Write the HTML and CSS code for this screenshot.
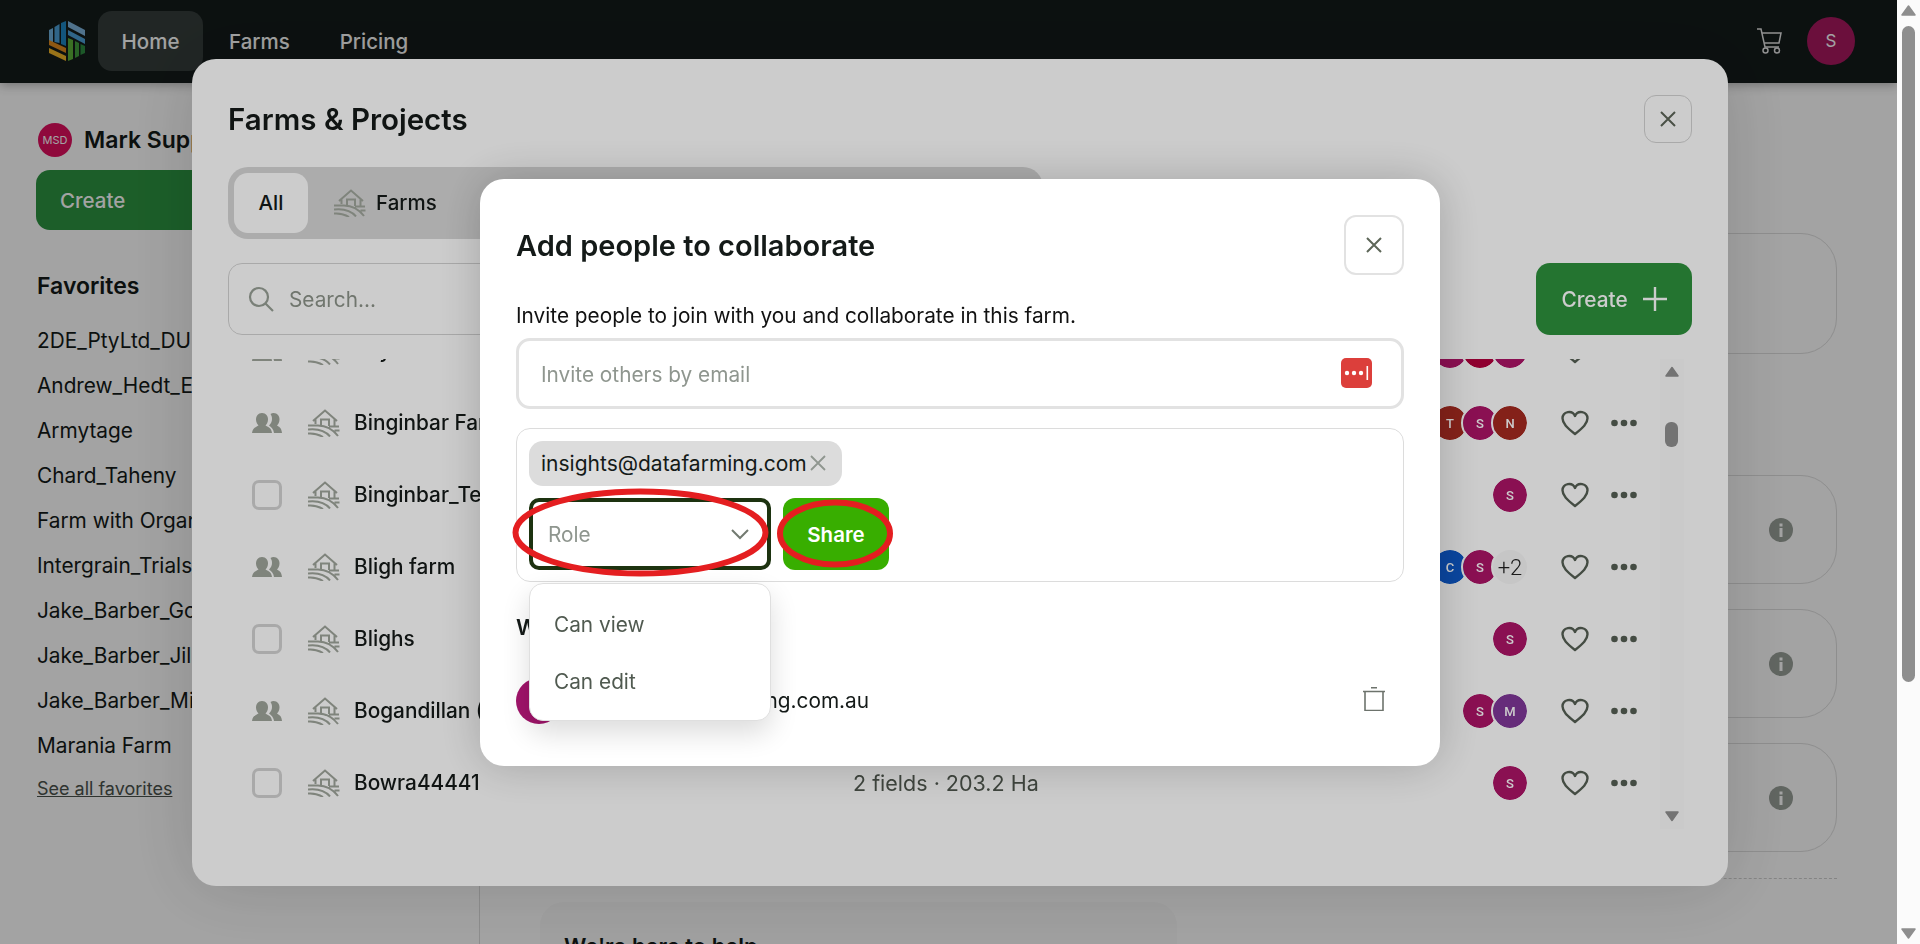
FILE: index.html
```html
<!doctype html>
<html>

<head>
<title>Farms &amp; Projects</title>
<link rel="stylesheet" href="styles.css">
</head>

<body>

<svg class="defs">
	<symbol id="farm" viewBox="0 0 32 28">
		<path d="M5 12 17 1.500 29 12M7.500 10.500V15M26.500 10.500V17M13 16V10.500h8V17" fill="none" stroke="currentColor" stroke-width="2"/>
		<path d="M0 16.500h10c8 0 15 4 20 10.500M0 20.500c9-1 17 1 22 7M0 24.500c6-.5 11 1 15 3.500M21 17.500h10M26.500 21.500h5" fill="none" stroke="currentColor" stroke-width="2"/>
	</symbol>
	<symbol id="people" viewBox="0 0 30 20">
		<path d="M10 0c4 0 6 3 6 6.500 0 3-1.500 5-2.500 6 2 1.500 6 2 6.500 7.500H0c.5-5.500 4.500-6 6.500-7.500-1-1-2.500-3-2.500-6C4 3 6 0 10 0Z" fill="currentColor"/>
		<path d="M18.500 1c1-.6 2-1 3-1 4 0 6 3 6 6.500 0 3-1.500 5-2.500 6 2 1.500 4.500 2 5 7.500h-8c-.5-4-3-6-5-7.500 2-2 3-4 3-6.500 0-2-.5-3.500-1.500-5Z" fill="currentColor"/>
	</symbol>
	<symbol id="heart" viewBox="0 0 28 26">
		<path d="M14 24C6 17.500 1.500 13.500 1.500 8.300A6.500 6.500 0 0 1 14 6a6.500 6.500 0 0 1 12.500 2.300C26.500 13.500 22 17.500 14 24Z" fill="none" stroke="currentColor" stroke-width="2.400" stroke-linejoin="round"/>
	</symbol>
	<symbol id="dots" viewBox="0 0 26 8">
		<circle cx="3.500" cy="4" r="3.300" fill="currentColor"/>
		<circle cx="13" cy="4" r="3.300" fill="currentColor"/>
		<circle cx="22.500" cy="4" r="3.300" fill="currentColor"/>
	</symbol>
	<symbol id="info" viewBox="0 0 24 24">
		<circle cx="12" cy="12" r="12" fill="currentColor"/>
		<rect x="10.500" y="10" width="3" height="9" fill="#fff"/>
		<rect x="10.500" y="5.500" width="3" height="3" fill="#fff"/>
	</symbol>
	<symbol id="cross" viewBox="0 0 18 18">
		<path d="M2 2l14 14M16 2 2 16" fill="none" stroke="currentColor" stroke-width="2"/>
	</symbol>
</svg>

<div id="page">
	<div id="header">
		<svg class="logo" viewBox="0 0 36 40">
			<path d="M0 9l4-2v14H0Z" fill="#6fb0dc"/>
			<path d="M5.500 6l5-3v19l-5-1Z" fill="#4c9fd6"/>
			<path d="M12 2l5-2v25l-5-2Z" fill="#1f86c4"/>
			<path d="M19 0l17 9v6L19 6Z" fill="#7db3dc"/>
			<path d="M19 9l17 9v5L19 14Z" fill="#4c9fd6"/>
			<path d="M0 19l17 8v5L0 24Z" fill="#e08a1e"/>
			<path d="M0 27l17 8v5L0 32Z" fill="#f0b428"/>
			<path d="M19 17l5 2v19l-5 2Z" fill="#5cae3a"/>
			<path d="M26 20l4 2v13l-4 2Z" fill="#3f9a3c"/>
			<path d="M31.500 23l4.500 2v7l-4.500 2Z" fill="#2e8a3f"/>
		</svg>
		<div class="navItem active">Home</div>
		<div class="navItem">Farms</div>
		<div class="navItem">Pricing</div>
		<div class="headerRight">
			<svg class="cart" viewBox="0 0 26 26">
				<path d="M1 1h4l4 18h14M6 5h19l-2 10H8" fill="none" stroke="currentColor" stroke-width="1.500"/>
				<circle cx="9.500" cy="22.500" r="2.500" fill="none" stroke="currentColor" stroke-width="1.500"/>
				<circle cx="21" cy="22.500" r="2.500" fill="none" stroke="currentColor" stroke-width="1.500"/>
			</svg>
			<div class="userAvatar">S</div>
		</div>
	</div>
	<div id="content">
		<div id="sidebar">
			<div class="account">
				<div class="accountAvatar">MSD</div>
				<div class="accountName">Mark Supplies Demo</div>
			</div>
			<div class="sideCreate">Create</div>
			<div class="favTitle">Favorites</div>
			<div class="favItem">2DE_PtyLtd_DUNN</div>
			<div class="favItem">Andrew_Hedt_East</div>
			<div class="favItem">Armytage</div>
			<div class="favItem">Chard_Taheny</div>
			<div class="favItem">Farm with Organic</div>
			<div class="favItem">Intergrain_Trials</div>
			<div class="favItem">Jake_Barber_Gold</div>
			<div class="favItem">Jake_Barber_Jilly</div>
			<div class="favItem">Jake_Barber_Mill</div>
			<div class="favItem">Marania Farm</div>
			<a class="seeAll">See all favorites</a>
		</div>
		<div id="main">
			<div class="mainLeft">
				<div class="helpCard">We're here to help</div>
			</div>
			<div class="mainRight">
				<div class="card first"></div>
				<div class="card"><svg class="infoIcon"><use href="#info"/></svg></div>
				<div class="card"><svg class="infoIcon"><use href="#info"/></svg></div>
				<div class="card"><svg class="infoIcon"><use href="#info"/></svg></div>
				<div class="dashed"></div>
			</div>
		</div>
	</div>
</div>

<div class="overlay">
	<div id="farmsModal">
		<div class="modalTop">
			<div class="modalTitle">Farms &amp; Projects</div>
			<div class="closeSmall"><svg class="crossIcon"><use href="#cross"/></svg></div>
		</div>
		<div class="tabs">
			<div class="tab selected">All</div>
			<div class="tab"><svg class="farmIcon tabIcon"><use href="#farm"/></svg>Farms</div>
		</div>
		<div class="toolbar">
			<div class="searchBox">
				<svg class="searchIcon" viewBox="0 0 26 26">
					<circle cx="11" cy="11" r="9" fill="none" stroke="currentColor" stroke-width="2.200"/>
					<path d="M17.500 17.500 25 25" stroke="currentColor" stroke-width="2.200"/>
				</svg>
				Search...
			</div>
			<div class="createBtn">Create
				<svg class="plusIcon" viewBox="0 0 24 24"><path d="M12 0v24M0 12h24" stroke="currentColor" stroke-width="2.400"/></svg>
			</div>
		</div>
		<div class="listWrap">
			<div class="rows">
				<div class="row firstRow">
					<svg class="peopleIcon"><use href="#people"/></svg>
					<svg class="farmIcon"><use href="#farm"/></svg>
					<div class="prodName">Bay</div>
					<div class="fields"></div>
					<div class="avatars">
						<div class="avatar magenta">S</div>
						<div class="avatar crimson">T</div>
						<div class="avatar magenta">S</div>
					</div>
					<svg class="heart"><use href="#heart"/></svg>
					<svg class="dots"><use href="#dots"/></svg>
				</div>
				<div class="row">
					<svg class="peopleIcon"><use href="#people"/></svg>
					<svg class="farmIcon"><use href="#farm"/></svg>
					<div class="prodName">Binginbar Farm</div>
					<div class="fields"></div>
					<div class="avatars">
						<div class="avatar rust">T</div>
						<div class="avatar magenta">S</div>
						<div class="avatar rust">N</div>
					</div>
					<svg class="heart"><use href="#heart"/></svg>
					<svg class="dots"><use href="#dots"/></svg>
				</div>
				<div class="row">
					<div class="checkbox"></div>
					<svg class="farmIcon"><use href="#farm"/></svg>
					<div class="prodName">Binginbar_Test</div>
					<div class="fields"></div>
					<div class="avatars">
						<div class="avatar magenta">S</div>
					</div>
					<svg class="heart"><use href="#heart"/></svg>
					<svg class="dots"><use href="#dots"/></svg>
				</div>
				<div class="row">
					<svg class="peopleIcon"><use href="#people"/></svg>
					<svg class="farmIcon"><use href="#farm"/></svg>
					<div class="prodName">Bligh farm</div>
					<div class="fields"></div>
					<div class="avatars">
						<div class="avatar blue">C</div>
						<div class="avatar magenta">S</div>
						<div class="avatar more">+2</div>
					</div>
					<svg class="heart"><use href="#heart"/></svg>
					<svg class="dots"><use href="#dots"/></svg>
				</div>
				<div class="row">
					<div class="checkbox"></div>
					<svg class="farmIcon"><use href="#farm"/></svg>
					<div class="prodName">Blighs</div>
					<div class="fields"></div>
					<div class="avatars">
						<div class="avatar magenta">S</div>
					</div>
					<svg class="heart"><use href="#heart"/></svg>
					<svg class="dots"><use href="#dots"/></svg>
				</div>
				<div class="row">
					<svg class="peopleIcon"><use href="#people"/></svg>
					<svg class="farmIcon"><use href="#farm"/></svg>
					<div class="prodName">Bogandillan (1)</div>
					<div class="fields"></div>
					<div class="avatars">
						<div class="avatar magenta">S</div>
						<div class="avatar purple">M</div>
					</div>
					<svg class="heart"><use href="#heart"/></svg>
					<svg class="dots"><use href="#dots"/></svg>
				</div>
				<div class="row">
					<div class="checkbox"></div>
					<svg class="farmIcon"><use href="#farm"/></svg>
					<div class="prodName">Bowra44441</div>
					<div class="fields">2 fields · 203.2 Ha</div>
					<div class="avatars">
						<div class="avatar magenta">S</div>
					</div>
					<svg class="heart"><use href="#heart"/></svg>
					<svg class="dots"><use href="#dots"/></svg>
				</div>
			</div>
			<div class="track">
				<svg class="arrow" viewBox="0 0 14 11"><path d="M7 1.500 13 10H1Z" fill="currentColor" stroke="currentColor" stroke-width="1.500" stroke-linejoin="round"/></svg>
				<div class="trackThumb"></div>
				<svg class="arrow down" viewBox="0 0 14 11"><path d="M7 9.500 13 1H1Z" fill="currentColor" stroke="currentColor" stroke-width="1.500" stroke-linejoin="round"/></svg>
			</div>
		</div>
	</div>
</div>

<div class="overlay">
	<div id="shareDialog">
		<div class="dialogTop">
			<div class="dialogTitle">Add people to collaborate</div>
			<div class="closeLarge"><svg class="crossIcon"><use href="#cross"/></svg></div>
		</div>
		<div class="inviteText">Invite people to join with you and collaborate in this farm.</div>
		<div class="emailInput">
			Invite others by email
			<svg class="passIcon" viewBox="0 0 31 30">
				<rect width="31" height="30" rx="5" fill="#dc3f3b"/>
				<circle cx="6" cy="15" r="2.200" fill="#fff"/>
				<circle cx="13" cy="15" r="2.200" fill="#fff"/>
				<circle cx="20" cy="15" r="2.200" fill="#fff"/>
				<rect x="25.500" y="8" width="1.600" height="14" fill="#fff"/>
			</svg>
		</div>
		<div class="shareBox">
			<div class="chipRow">
				<div class="chip">insights@datafarming.com
					<svg class="chipX" viewBox="0 0 16 16"><path d="M1 1l14 14M15 1 1 15" stroke="currentColor" stroke-width="1.800"/></svg>
				</div>
			</div>
			<div class="roleRow">
				<div class="roleSelect">
					Role
					<svg class="chevron" viewBox="0 0 18 11"><path d="M1 1l8 8 8-8" fill="none" stroke="currentColor" stroke-width="2"/></svg>
				</div>
				<div class="shareBtn">Share</div>
			</div>
			<div class="roleMenu">
				<div class="roleOption">Can view</div>
				<div class="roleOption">Can edit</div>
			</div>
			<svg class="marks" viewBox="0 0 888 154">
				<ellipse cx="124.500" cy="104.500" rx="125" ry="41" fill="none" stroke="#e41e20" stroke-width="6"/>
				<ellipse cx="319" cy="105.500" rx="55" ry="31" fill="none" stroke="#e41e20" stroke-width="6"/>
			</svg>
		</div>
		<div class="accessTitle">Who has access</div>
		<div class="member">
			<div class="memberAvatar">S</div>
			<div class="memberEmail">insights@datafarming.com.au</div>
			<svg class="trash" viewBox="0 0 22 24">
				<path d="M8 .800h6M0 4.500h22M2 4.500v19h18v-19" fill="none" stroke="currentColor" stroke-width="1.600"/>
			</svg>
		</div>
	</div>
</div>

<div id="pageScroll">
	<svg class="scrollArrow" viewBox="0 0 15 11"><path d="M7.500 1 14 10H1Z" fill="currentColor" stroke="currentColor" stroke-width="1.500" stroke-linejoin="round"/></svg>
	<div class="scrollThumb"></div>
	<svg class="scrollArrow bottom" viewBox="0 0 15 11"><path d="M7.500 10 14 1H1Z" fill="currentColor" stroke="currentColor" stroke-width="1.500" stroke-linejoin="round"/></svg>
</div>

</body>

</html>
```

FILE: styles.css
```css
html,body {
	margin:0;
	height:100%;
	overflow:hidden;
	font-family:"Inter","Liberation Sans",sans-serif;
	font-size:20.800px;
	color:#141a18;
	background-color:#fff;
}
.defs {
	display:none;
}
#page {
	width:1897px;
	height:944px;
	overflow:hidden;
}

/* header */
#header {
	height:83px;
	box-sizing:border-box;
	padding-bottom:1px;
	display:flex;
	align-items:center;
	background-color:#141c1b;
	color:#fff;
	box-shadow:0 2px 10px rgba(0,0,0,.3);
	position:relative;
}
.logo {
	width:36px;
	height:40px;
	margin-left:49px;
	margin-right:13px;
}
.navItem {
	height:60px;
	line-height:62px;
	padding:0 24px;
	font-size:20.500px;
	font-weight:500;
	border-radius:14px;
	margin-right:2px;
}
.navItem.active {
	background-color:#353d3b;
	width:105px;
	padding:0;
	text-align:center;
}
.headerRight {
	margin-left:auto;
	display:flex;
	align-items:center;
	margin-right:42px;
}
.cart {
	width:26px;
	height:26px;
	color:#e4e4e4;
	margin-right:25px;
}
.userAvatar {
	width:48px;
	height:48px;
	border-radius:50%;
	background-color:#a81860;
	display:flex;
	align-items:center;
	justify-content:center;
	font-size:17px;
}

/* page behind the modals */
#content {
	display:flex;
	height:861px;
}
#sidebar {
	width:480px;
	border-right:1px solid #ddd;
	padding:40px 0 0 37px;
	box-sizing:border-box;
	flex-shrink:0;
	overflow:hidden;
	white-space:nowrap;
}
.account {
	display:flex;
	align-items:center;
	height:34px;
	margin-left:1px;
}
.accountAvatar {
	width:34px;
	height:34px;
	border-radius:50%;
	background-color:#e01060;
	color:#fff;
	font-size:11px;
	display:flex;
	align-items:center;
	justify-content:center;
	margin-right:12px;
}
.accountName {
	font-size:23px;
	font-weight:600;
}
.sideCreate {
	height:60px;
	line-height:62px;
	width:300px;
	margin:13px 0 0 -1px;
	padding-left:24px;
	box-sizing:border-box;
	border-radius:14px;
	background-color:#2c9441;
	color:#fff;
	font-size:20.500px;
	font-weight:500;
}
.favTitle {
	font-size:23px;
	font-weight:600;
	margin-top:42px;
	margin-bottom:18px;
}
.favItem {
	height:45px;
	line-height:45px;
}
.seeAll {
	display:block;
	font-size:18px;
	margin-top:9px;
	line-height:24px;
	text-decoration:underline;
	color:#4a524c;
}
#main {
	flex:1;
	display:flex;
	padding:0 60px;
	gap:20px;
}
.mainLeft {
	width:637px;
	padding-top:819px;
	flex-shrink:0;
}
.helpCard {
	height:200px;
	border-radius:24px;
	background-color:#fafafa;
	padding:31px 24px;
	box-sizing:border-box;
	font-size:22px;
	font-weight:600;
}
.mainRight {
	flex:1;
	padding-top:150px;
}
.card {
	height:109px;
	border:1px solid #dfdfdf;
	border-radius:36px;
	box-sizing:border-box;
	margin-bottom:25px;
	display:flex;
	align-items:center;
	justify-content:flex-end;
	padding-right:43px;
}
.card.first {
	height:121px;
	margin-bottom:121px;
}
.infoIcon {
	width:24px;
	height:24px;
	color:#99a099;
}
.dashed {
	border-top:1px dashed #d0d0d0;
	margin-top:26px;
}

/* overlays */
.overlay {
	position:fixed;
	left:0;
	top:0;
	width:100%;
	height:100%;
	display:flex;
	align-items:center;
	justify-content:center;
	background-color:rgba(0,0,0,.2);
}

/* farms modal */
#farmsModal {
	width:1536px;
	height:827px;
	box-sizing:border-box;
	padding:36px 36px 0;
	border-radius:24px;
	background-color:#fff;
	box-shadow:0 0 70px rgba(0,0,0,.14);
}
.modalTop {
	display:flex;
	align-items:center;
	justify-content:space-between;
	height:48px;
}
.modalTitle {
	font-size:29.500px;
	font-weight:600;
	padding-top:1px;
}
.closeSmall {
	width:48px;
	height:48px;
	box-sizing:border-box;
	border:1px solid #d4d4d4;
	border-radius:12px;
	display:flex;
	align-items:center;
	justify-content:center;
	color:#5d6658;
}
.crossIcon {
	width:18px;
	height:18px;
}
.tabs {
	display:flex;
	width:815px;
	height:72px;
	box-sizing:border-box;
	padding:6px;
	margin-top:24px;
	border-radius:20px;
	background-color:#d8d8d8;
}
.tab {
	height:60px;
	display:flex;
	align-items:center;
	padding:0 26px;
	border-radius:14px;
	font-size:20.500px;
	font-weight:500;
}
.tab.selected {
	width:74px;
	padding:0;
	justify-content:center;
	background-color:#fff;
}
.tabIcon {
	margin-right:10px;
	color:#626a60;
}
.farmIcon {
	width:32px;
	height:28px;
	color:#9fa59b;
	flex-shrink:0;
}
.toolbar {
	display:flex;
	justify-content:space-between;
	margin-top:24px;
}
.searchBox {
	width:815px;
	height:72px;
	box-sizing:border-box;
	border:1px solid #d4d4d4;
	border-radius:14px;
	display:flex;
	align-items:center;
	padding:2px 0 0 19px;
	color:#8d948a;
}
.searchIcon {
	width:26px;
	height:26px;
	margin:-2px 15px 0 0;
	color:#98a096;
}
.createBtn {
	width:156px;
	height:72px;
	box-sizing:border-box;
	padding-top:1px;
	display:flex;
	align-items:center;
	justify-content:center;
	border-radius:14px;
	background-color:#2e913d;
	color:#fff;
	font-weight:500;
}
.plusIcon {
	width:24px;
	height:24px;
	margin:-1px 0 0 15px;
}

/* list */
.listWrap {
	display:flex;
	height:470px;
	margin:24px 8px 0 0;
	overflow:hidden;
}
.rows {
	flex:1;
}
.row {
	height:72px;
	display:flex;
	align-items:center;
	padding:0 23px 0 24px;
}
.firstRow {
	margin-top:-44px;
}
.peopleIcon {
	width:30px;
	height:20px;
	color:#9fa59b;
	margin-right:26px;
	flex-shrink:0;
}
.checkbox {
	width:30px;
	height:30px;
	box-sizing:border-box;
	border:3px solid #d4d4d4;
	border-radius:7px;
	margin-right:26px;
	flex-shrink:0;
}
.prodName {
	width:499px;
	margin-left:14px;
	font-weight:500;
}
.fields {
	flex:1;
	color:#4f574e;
	font-size:21.500px;
}
.avatars {
	display:flex;
	margin-top:1px;
}
.avatar {
	width:38px;
	height:38px;
	box-sizing:border-box;
	border:2px solid #fff;
	border-radius:50%;
	margin-left:-8px;
	color:#fff;
	font-family:"Roboto","Liberation Sans",sans-serif;
	font-size:13px;
	font-weight:500;
	display:flex;
	align-items:center;
	justify-content:center;
}
.magenta {background-color:#ad1467; background-clip:padding-box;}
.crimson {background-color:#b3003c; background-clip:padding-box;}
.rust {background-color:#a62a20; background-clip:padding-box;}
.blue {background-color:#0d58c8; background-clip:padding-box;}
.purple {background-color:#803899; background-clip:padding-box;}
.avatar.more {
	background-color:#f8f8f8;
	color:#222;
	font-size:22px;
	font-weight:300;
}
.heart {
	width:28px;
	height:26px;
	margin-left:32px;
	color:#566054;
	flex-shrink:0;
}
.dots {
	width:26px;
	height:8px;
	margin-left:22px;
	color:#566054;
	flex-shrink:0;
}
.track {
	width:24px;
	background-color:#fdfdfd;
	position:relative;
	display:flex;
	flex-direction:column;
	align-items:center;
}
.arrow {
	width:14px;
	height:11px;
	margin-top:7px;
	color:#909090;
}
.arrow.down {
	margin-top:auto;
	margin-bottom:7px;
}
.trackThumb {
	position:absolute;
	left:5px;
	top:63px;
	width:13px;
	height:25px;
	border-radius:6px;
	background-color:#909090;
}

/* share dialog */
#shareDialog {
	width:960px;
	height:587px;
	box-sizing:border-box;
	padding:36px;
	border-radius:24px;
	background-color:#fff;
	box-shadow:0 0 45px rgba(0,0,0,.2);
	overflow:hidden;
}
.dialogTop {
	display:flex;
	align-items:center;
	justify-content:space-between;
	height:60px;
}
.dialogTitle {
	font-size:29px;
	font-weight:600;
	padding-top:1px;
}
.closeLarge {
	width:60px;
	height:60px;
	box-sizing:border-box;
	border:2px solid #e2e2e2;
	border-radius:12px;
	display:flex;
	align-items:center;
	justify-content:center;
	color:#5d6658;
}
.inviteText {
	margin-top:29px;
	line-height:24px;
	color:#111;
}
.emailInput {
	height:71px;
	margin-top:10px;
	box-sizing:border-box;
	border:3px solid #e2e2e2;
	border-radius:14px;
	display:flex;
	align-items:center;
	justify-content:space-between;
	padding:2px 29px 0 22px;
	color:#8f968f;
}
.passIcon {
	width:31px;
	height:30px;
	margin-top:-2px;
}
.shareBox {
	position:relative;
	height:154px;
	margin-top:19px;
	box-sizing:border-box;
	border:1px solid #dcdcdc;
	border-radius:14px;
	padding:12px;
}
.chipRow {
	display:flex;
}
.chip {
	height:45px;
	box-sizing:border-box;
	display:flex;
	align-items:center;
	padding:1px 16px 0 12px;
	border-radius:14px;
	background-color:#dcdcdc;
	font-size:21px;
}
.chipX {
	width:16px;
	height:16px;
	margin:-1px 0 0 3px;
	color:#8f968f;
}
.roleRow {
	display:flex;
	gap:12px;
	margin-top:12px;
}
.roleSelect {
	width:242px;
	height:72px;
	box-sizing:border-box;
	border:4px solid #1d3310;
	border-radius:10px;
	display:flex;
	align-items:center;
	justify-content:space-between;
	padding:1px 18px 0 15px;
	color:#8f968f;
}
.chevron {
	width:18px;
	height:11px;
	color:#727a70;
}
.shareBtn {
	width:106px;
	height:72px;
	line-height:74px;
	text-align:center;
	border-radius:12px;
	background-color:#38ae00;
	color:#fff;
	font-size:20.500px;
	font-weight:600;
}
.roleMenu {
	position:absolute;
	left:12px;
	top:154px;
	width:242px;
	height:138px;
	box-sizing:border-box;
	border:1px solid #dfdfdf;
	border-radius:14px;
	background-color:#fff;
	box-shadow:0 12px 28px rgba(0,0,0,.14);
	padding-top:12px;
	z-index:2;
}
.roleOption {
	height:57px;
	line-height:57px;
	padding-left:24px;
	color:#505a50;
}
.marks {
	position:absolute;
	left:-1px;
	top:-1px;
	width:888px;
	height:154px;
	overflow:visible;
	z-index:3;
}
.accessTitle {
	margin-top:33px;
	font-size:22px;
	font-weight:600;
	line-height:24px;
}
.member {
	display:flex;
	align-items:center;
	height:46px;
	margin-top:39px;
}
.memberAvatar {
	width:46px;
	height:46px;
	border-radius:50%;
	background-color:#a0146a;
	color:#fff;
	display:flex;
	align-items:center;
	justify-content:center;
	margin-right:14px;
}
.memberEmail {
	flex:1;
}
.trash {
	width:22px;
	height:24px;
	margin:-3px 19px 0 0;
	color:#6d736c;
}

/* browser scrollbar */
#pageScroll {
	position:fixed;
	right:0;
	top:0;
	width:23px;
	height:100%;
	background-color:#fbfbfb;
}
.scrollArrow {
	position:absolute;
	left:4px;
	top:5px;
	width:15px;
	height:11px;
	color:#8e8e8e;
}
.scrollArrow.bottom {
	top:auto;
	bottom:5px;
}
.scrollThumb {
	position:absolute;
	left:5px;
	top:26px;
	width:13px;
	height:656px;
	border-radius:7px;
	background-color:#8e8e8e;
}
```
